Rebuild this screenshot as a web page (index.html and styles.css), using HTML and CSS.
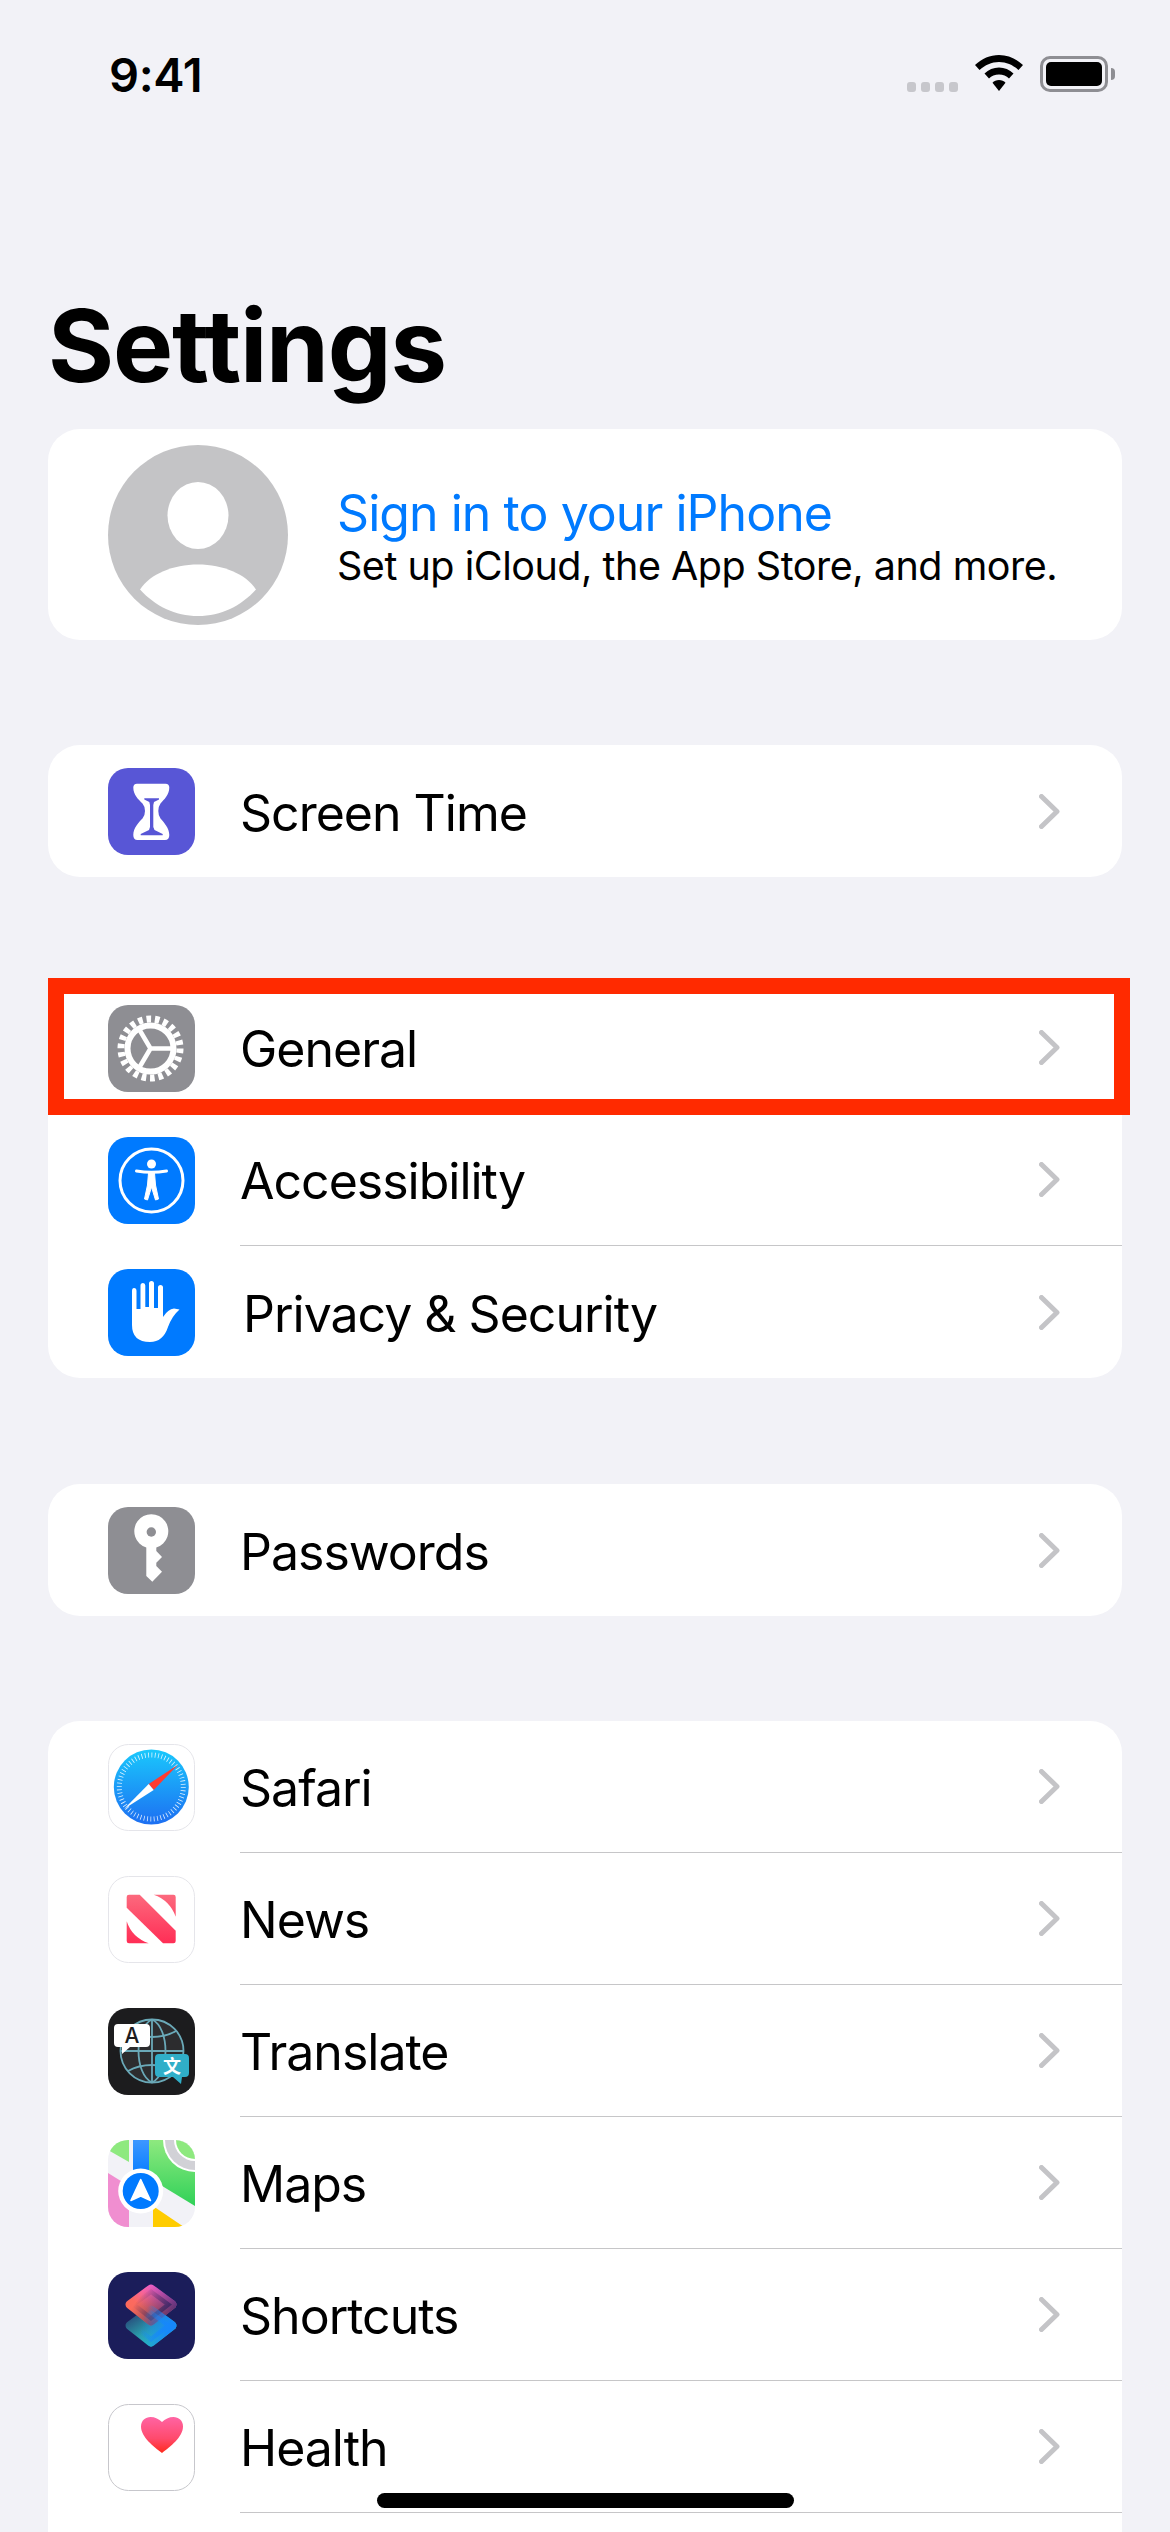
FILE: index.html
```html
<!DOCTYPE html>
<html lang="en">
<head>
    <meta charset="UTF-8">
    <meta name="viewport" content="width=device-width, initial-scale=1.0">
    <title>Settings</title>
    <link rel="stylesheet" href="styles.css">
</head>
<body>
    <svg class="defs" width="0" height="0">
        <defs>
            <symbol id="chevron" viewBox="0 0 21 35">
                <path d="M2.5 2.5 L18 17.5 L2.5 32.5" fill="none" stroke="#c4c4c7" stroke-width="5" stroke-linecap="round" stroke-linejoin="round"/>
            </symbol>
            <clipPath id="tile"><rect width="87" height="87" rx="20"/></clipPath>
            <linearGradient id="safari-bg" x1="0" y1="0" x2="0" y2="1"><stop offset="0" stop-color="#1ac8fc"/><stop offset="1" stop-color="#1d6ff2"/></linearGradient>
            <linearGradient id="news-bg" gradientUnits="userSpaceOnUse" x1="0" y1="18" x2="0" y2="68"><stop offset="0" stop-color="#fc6a7e"/><stop offset="1" stop-color="#ff2d55"/></linearGradient>
            <linearGradient id="maps-green" x1="0" y1="0" x2="0" y2="1"><stop offset="0" stop-color="#8ee97f"/><stop offset="1" stop-color="#30d158"/></linearGradient>
            <linearGradient id="maps-blue" x1="0" y1="0" x2="0" y2="1"><stop offset="0" stop-color="#3d97ff"/><stop offset="1" stop-color="#007aff"/></linearGradient>
            <linearGradient id="cut-top" gradientUnits="userSpaceOnUse" x1="46" y1="12" x2="26" y2="42"><stop offset="0" stop-color="#f65fd8"/><stop offset="0.7" stop-color="#fb6a60"/><stop offset="1" stop-color="#fb6a58"/></linearGradient>
            <linearGradient id="cut-shade" gradientUnits="userSpaceOnUse" x1="32" y1="24" x2="66" y2="48"><stop offset="0" stop-color="#1b1d5a" stop-opacity="0"/><stop offset="1" stop-color="#1b1d5a" stop-opacity="0.8"/></linearGradient>
            <linearGradient id="cut-bottom" gradientUnits="userSpaceOnUse" x1="28" y1="42" x2="48" y2="74"><stop offset="0" stop-color="#28507e"/><stop offset="0.55" stop-color="#2a9fac"/><stop offset="1" stop-color="#33dc9c"/></linearGradient>
            <linearGradient id="cut-right" gradientUnits="userSpaceOnUse" x1="36" y1="44" x2="62" y2="52"><stop offset="0" stop-color="#1687fb" stop-opacity="0"/><stop offset="1" stop-color="#1687fb"/></linearGradient>
            <linearGradient id="heart-bg" x1="0" y1="0" x2="0" y2="1"><stop offset="0" stop-color="#ff64a4"/><stop offset="0.6" stop-color="#ff4a6c"/><stop offset="1" stop-color="#ff2a1c"/></linearGradient>
        </defs>
    </svg>

    <div class="status-bar">
        <span class="status-time">9:41</span>
        <div class="status-icons">
            <div class="signal"><i></i><i></i><i></i><i></i></div>
            <svg class="wifi" viewBox="0 0 48 36" width="48" height="36">
                <path d="M24 0 C33 0 41 3.5 48 10 L43.5 15 C38 10 31.5 7 24 7 C16.5 7 10 10 4.5 15 L0 10 C7 3.5 15 0 24 0Z"/>
                <path d="M24 12.5 C29.5 12.5 34.5 14.5 38.5 18.5 L34 23.5 C31.5 21 28 19.5 24 19.5 C20 19.5 16.5 21 14 23.5 L9.5 18.5 C13.5 14.5 18.5 12.5 24 12.5Z"/>
                <path d="M24 25 C26.5 25 29 26 30.5 27.7 L24 36 L17.5 27.7 C19 26 21.5 25 24 25Z"/>
            </svg>
            <div class="battery"><div class="battery-level"></div></div>
            <div class="battery-nub"></div>
        </div>
    </div>

    <h1 class="page-title">Settings</h1>

    <div class="card card-profile">
        <svg class="avatar" viewBox="0 0 180 180" width="180" height="180">
            <circle cx="90" cy="90" r="90" fill="#c4c4c6"/>
            <ellipse cx="90" cy="70.5" rx="30.5" ry="33.5" fill="#fff"/>
            <path d="M32 144.5 C42 129 65 119.5 90 119.5 C115 119.5 138 129 148 144.5 C133 161 113 171 90 171 C67 171 47 161 32 144.5Z" fill="#fff"/>
        </svg>
        <div class="profile-text">
            <div class="profile-title">Sign in to your iPhone</div>
            <div class="profile-sub">Set up iCloud, the App Store, and more.</div>
        </div>
    </div>

    <div class="card">
        <div class="row">
            <svg class="app-icon" viewBox="0 0 87 87">
                <rect width="87" height="87" rx="20" fill="#5856d6"/>
                <path d="M29 15.7 H57.5 Q61.3 15.7 61.3 19.5 C61.3 27 56 31.5 52.5 35.5 Q50.3 38.5 50.3 43 Q50.3 47.5 52.5 50.5 C56 54.5 61.3 60 61.3 67 Q61.3 72 57 72 H29.5 Q25.3 72 25.3 67 C25.3 60 30.5 54.5 34.5 50.5 Q37 47.5 37 43 Q37 38.5 34.5 35.5 C30.5 31.5 25.3 27 25.3 19.5 Q25.3 15.7 29 15.7Z" fill="#fff"/>
                <path d="M36.3 30.3 H51 V31.5 L46 34 L45.3 37 V59 L46.5 62 L54.7 66 V67.3 H32.7 V66 L41 62 L42 59 V37 L41.3 34 L36.3 31.5Z" fill="#5856d6"/>
            </svg>
            <div class="row-main row-main-last"><span class="row-label">Screen Time</span><svg class="chevron"><use href="#chevron"/></svg></div>
        </div>
    </div>

    <div class="card card-tall">
        <div class="row row-highlight">
            <svg class="app-icon" viewBox="0 0 87 87">
                <rect width="87" height="87" rx="20" fill="#8e8e93"/>
                <circle cx="42.5" cy="43.5" r="29.5" fill="none" stroke="#fff" stroke-width="7" stroke-dasharray="4.6 3.825"/>
                <circle cx="42.5" cy="43.5" r="23" fill="none" stroke="#fff" stroke-width="6"/>
                <path d="M42.5 43.5 L31 24 M42.5 43.5 H67 M42.5 43.5 L31 63" fill="none" stroke="#fff" stroke-width="4.5"/>
            </svg>
            <div class="row-main"><span class="row-label">General</span><svg class="chevron"><use href="#chevron"/></svg></div>
            <div class="highlight-frame"></div>
        </div>
        <div class="row">
            <svg class="app-icon" viewBox="0 0 87 87">
                <rect width="87" height="87" rx="20" fill="#007aff"/>
                <circle cx="43.5" cy="43.5" r="31.5" fill="none" stroke="#fff" stroke-width="3"/>
                <circle cx="43.5" cy="27" r="4.5" fill="#fff"/>
                <path d="M28.5 34 Q43.5 36.5 58.5 34" fill="none" stroke="#fff" stroke-width="3" stroke-linecap="round"/>
                <path d="M40.5 36 H46.5 L47.5 48 L50.5 62 L47.5 63 L43.5 50 L39.5 63 L36.5 62 L39.5 48Z" fill="#fff" stroke="#fff" stroke-linejoin="round"/>
            </svg>
            <div class="row-main"><span class="row-label">Accessibility</span><svg class="chevron"><use href="#chevron"/></svg></div>
        </div>
        <div class="row">
            <svg class="app-icon" viewBox="0 0 87 87">
                <rect width="87" height="87" rx="20" fill="#007aff"/>
                <path d="M24 22 Q24 19 26 19 Q28.5 19 28.5 22 V40 H32.5 V16.5 Q32.5 14 35 14 Q37.3 14 37.3 16.5 V38 H41 V14.5 Q41 12 43.5 12 Q46 12 46 14.5 V39 H50 V18.5 Q50 16 52.5 16 Q55 16 55 18.5 V48 Q60 40 66 39.5 L71.5 40.5 Q64 47 60 58 Q55 73 42 73 Q24 73 24 56Z" fill="#fff"/>
            </svg>
            <div class="row-main row-main-last"><span class="row-label row-label-privacy">Privacy &amp; Security</span><svg class="chevron"><use href="#chevron"/></svg></div>
        </div>
    </div>

    <div class="card">
        <div class="row">
            <svg class="app-icon" viewBox="0 0 87 87">
                <rect width="87" height="87" rx="20" fill="#8e8e93"/>
                <path d="M38.3 40.5 A17 17 0 1 1 48.3 40.5 V44 L54 50 L48.3 55.7 V59 L54 64.7 L44.3 74.7 L38.3 69Z" fill="#fff"/>
                <circle cx="43.3" cy="25" r="4.7" fill="#8e8e93"/>
            </svg>
            <div class="row-main row-main-last"><span class="row-label">Passwords</span><svg class="chevron"><use href="#chevron"/></svg></div>
        </div>
    </div>

    <div class="card card-last">
        <div class="row">
            <svg class="app-icon" viewBox="0 0 87 87">
                <rect x="0.5" y="0.5" width="86" height="86" rx="20" fill="#fff" stroke="#e5e5ea"/>
                <circle cx="43.3" cy="43" r="37.5" fill="url(#safari-bg)"/>
                <circle cx="43.3" cy="43" r="32" fill="none" stroke="#fff" stroke-opacity="0.85" stroke-width="5" stroke-dasharray="0.8 2.55"/>
                <path d="M70 20.7 L40.7 40 L45.7 46Z" fill="#ff3b30"/>
                <path d="M16 65 L40.7 40 L45.7 46Z" fill="#fff"/>
            </svg>
            <div class="row-main"><span class="row-label">Safari</span><svg class="chevron"><use href="#chevron"/></svg></div>
        </div>
        <div class="row">
            <svg class="app-icon" viewBox="0 0 87 87">
                <rect x="0.5" y="0.5" width="86" height="86" rx="20" fill="#fff" stroke="#e5e5ea"/>
                <path d="M31.7 18.7 L67.7 54.7 V65 Q67.7 67.3 65.5 67.3 H55 L18.7 31.7 V21 Q18.7 18.7 21 18.7Z" fill="url(#news-bg)"/>
                <path d="M45.7 18.7 H65.5 Q67.7 18.7 67.7 21 V40.7 Q62 24.5 45.7 18.7Z" fill="url(#news-bg)"/>
                <path d="M18.7 45.3 Q24 61.5 40.7 67.3 H21 Q18.7 67.3 18.7 65Z" fill="url(#news-bg)"/>
            </svg>
            <div class="row-main"><span class="row-label">News</span><svg class="chevron"><use href="#chevron"/></svg></div>
        </div>
        <div class="row">
            <svg class="app-icon" viewBox="0 0 87 87">
                <rect width="87" height="87" rx="20" fill="#1c1c1e"/>
                <circle cx="44" cy="43" r="31.5" fill="#2c2c2e" stroke="#6aa9b8" stroke-width="1.8"/>
                <g fill="none" stroke="#6aa9b8" stroke-width="1.8">
                    <path d="M44 11.5 V74.5 M12.5 43 H75.5"/>
                    <path d="M44 11.5 C62 20 62 66 44 74.5 C26 66 26 20 44 11.5"/>
                    <path d="M20 23 C34 31 54 31 68 23 M20 63 C34 55 54 55 68 63"/>
                </g>
                <path d="M10 16 H38 Q42 16 42 20 V35 Q42 39 38 39 H22 L14 46 V39 H10 Q6 39 6 35 V20 Q6 16 10 16Z" fill="#fff"/>
                <text class="translate-a" x="24" y="34.5">A</text>
                <path d="M51 46 H77 Q81 46 81 50 V65 Q81 69 77 69 H74 L73 76 L65 69 H51 Q47 69 47 65 V50 Q47 46 51 46Z" fill="#30aec8"/>
                <text class="translate-zh" x="64" y="65">文</text>
            </svg>
            <div class="row-main"><span class="row-label">Translate</span><svg class="chevron"><use href="#chevron"/></svg></div>
        </div>
        <div class="row">
            <svg class="app-icon" viewBox="0 0 87 87">
                <g clip-path="url(#tile)">
                    <rect width="87" height="87" fill="#f2f2f7"/>
                    <path d="M0 0 H21 V22 L0 10Z" fill="#8ee97f"/>
                    <path d="M0 33 L21 46 V87 H0Z" fill="#f08ed0"/>
                    <path d="M41 0 H87 V66 L41 38Z" fill="url(#maps-green)"/>
                    <circle cx="87" cy="0" r="32" fill="#fff"/>
                    <circle cx="87" cy="0" r="30" fill="#d1d1d6"/>
                    <circle cx="87" cy="0" r="21" fill="#fff"/>
                    <circle cx="87" cy="0" r="19" fill="#8ee97f"/>
                    <path d="M45 66 L76 87 H45Z" fill="#ffcc00"/>
                    <rect x="25" width="16" height="40" fill="url(#maps-blue)"/>
                    <circle cx="32.7" cy="51" r="22.5" fill="#fff"/>
                    <circle cx="32.7" cy="51" r="18" fill="#007aff"/>
                    <path d="M32.7 39.5 L42.5 60.5 L32.7 56 L22.9 60.5Z" fill="#fff" stroke="#fff" stroke-linejoin="round" stroke-width="1.5"/>
                </g>
            </svg>
            <div class="row-main"><span class="row-label">Maps</span><svg class="chevron"><use href="#chevron"/></svg></div>
        </div>
        <div class="row">
            <svg class="app-icon" viewBox="0 0 87 87">
                <rect width="87" height="87" rx="20" fill="#1b1d5a"/>
                <path d="M43 38 L64 53.5 L43 70 L22 53.5Z" fill="url(#cut-bottom)" stroke="url(#cut-bottom)" stroke-width="9" stroke-linejoin="round"/>
                <path d="M43 17 L64 32.5 L43 49 L22 32.5Z" fill="url(#cut-top)" stroke="url(#cut-top)" stroke-width="9" stroke-linejoin="round"/>
                <path d="M43 17 L64 32.5 L43 49 L22 32.5Z" fill="url(#cut-shade)" stroke="url(#cut-shade)" stroke-width="9" stroke-linejoin="round"/>
                <path d="M43 38 L64 53.5 L43 70 L22 53.5Z" fill="url(#cut-right)" stroke="url(#cut-right)" stroke-width="9" stroke-linejoin="round"/>
            </svg>
            <div class="row-main"><span class="row-label">Shortcuts</span><svg class="chevron"><use href="#chevron"/></svg></div>
        </div>
        <div class="row">
            <svg class="app-icon" viewBox="0 0 87 87">
                <rect x="0.5" y="0.5" width="86" height="86" rx="20" fill="#fff" stroke="#c7c7cc"/>
                <path d="M54 49 C46 43 33 33 33 22.5 C33 16.5 37.5 13 42.5 13 C47 13 51 15 54 18 C57 15 61 13 65.5 13 C70.5 13 75 16.5 75 22.5 C75 33 62 43 54 49Z" fill="url(#heart-bg)"/>
            </svg>
            <div class="row-main"><span class="row-label">Health</span><svg class="chevron"><use href="#chevron"/></svg></div>
        </div>
    </div>

    <div class="home-indicator"></div>
</body>
</html>
```

FILE: styles.css
```css
html, body {
    margin: 0;
    padding: 0;
}

body {
    position: relative;
    height: 2532px;
    overflow: hidden;
    background-color: #f2f2f7;
    color: #000;
    font-family: Inter, "Liberation Sans", sans-serif;
}

.defs {
    position: absolute;
}

/* status bar */
.status-bar {
    display: flex;
    justify-content: space-between;
    align-items: flex-start;
    height: 150px;
    padding: 47px 55px 0 109px;
    box-sizing: border-box;
}

.status-time {
    font-size: 47px;
    line-height: 56px;
    font-weight: 600;
    letter-spacing: -0.4px;
}

.status-icons {
    display: flex;
    align-items: flex-start;
    padding-top: 8px;
}

.signal {
    display: flex;
    gap: 5px;
    margin-top: 27px;
    margin-right: 17px;
}

.signal i {
    display: block;
    width: 9px;
    height: 10px;
    border-radius: 3px;
    background-color: #c7c7cc;
}

.wifi {
    fill: #000;
    margin-right: 17px;
}

.battery {
    width: 68px;
    height: 36px;
    box-sizing: border-box;
    border: 3px solid #8e8e93;
    border-radius: 10px;
    padding: 3px;
    margin-top: 1px;
}

.battery-level {
    width: 100%;
    height: 100%;
    border-radius: 5px;
    background-color: #000;
}

.battery-nub {
    width: 4px;
    height: 12px;
    margin: 13px 0 0 3px;
    border-radius: 0 6px 6px 0;
    background-color: #8e8e93;
}

.page-title {
    margin: 0;
    height: 279px;
    padding: 100px 0 0 48px;
    box-sizing: border-box;
    font-size: 101px;
    line-height: 190px;
    font-weight: 700;
    letter-spacing: -1.2px;
}

/* grouped cards */
.card {
    width: 1074px;
    margin: 0 0 105px 48px;
    background-color: #fff;
    border-radius: 32px;
}

.card-tall {
    margin-bottom: 106px;
}

.card-last {
    margin-bottom: 0;
    padding-bottom: 60px;
    border-radius: 32px 32px 0 0;
}

.card-profile {
    display: flex;
    align-items: center;
    height: 211px;
    padding-left: 60px;
    box-sizing: border-box;
}

.avatar {
    flex: none;
}

.profile-text {
    margin-left: 49px;
    margin-top: 1px;
}

.profile-title {
    color: #007aff;
    font-size: 50px;
    line-height: 62px;
    letter-spacing: -0.95px;
}

.profile-sub {
    font-size: 39.5px;
    line-height: 44px;
    letter-spacing: -0.48px;
}

.row {
    position: relative;
    display: flex;
    align-items: center;
    height: 132px;
    padding-left: 60px;
}

.app-icon {
    flex: none;
    width: 87px;
    height: 87px;
    margin-right: 45px;
}

.row-main {
    flex: 1;
    display: flex;
    align-items: center;
    justify-content: space-between;
    align-self: stretch;
    padding-right: 62px;
    border-bottom: 1px solid #c6c6c8;
}

.row-main-last {
    border-bottom: none;
}

.row-label {
    padding-top: 3px;
    font-size: 50px;
    letter-spacing: -1px;
}

.row-label-privacy {
    margin-left: 3px;
}

.chevron {
    width: 21px;
    height: 35px;
}

/* red annotation round the General row */
.highlight-frame {
    position: absolute;
    top: -4px;
    bottom: -1px;
    left: 0;
    right: -8px;
    border: 16px solid #ff2a00;
}

.translate-a {
    font-family: Inter, sans-serif;
    font-size: 21px;
    font-weight: 500;
    fill: #1c1c1e;
    text-anchor: middle;
}

.translate-zh {
    font-family: "Noto Sans CJK SC", sans-serif;
    font-size: 18px;
    font-weight: 700;
    fill: #fff;
    text-anchor: middle;
}

.home-indicator {
    position: absolute;
    left: 377px;
    top: 2493px;
    width: 417px;
    height: 15px;
    border-radius: 8px;
    background-color: #000;
}
```
